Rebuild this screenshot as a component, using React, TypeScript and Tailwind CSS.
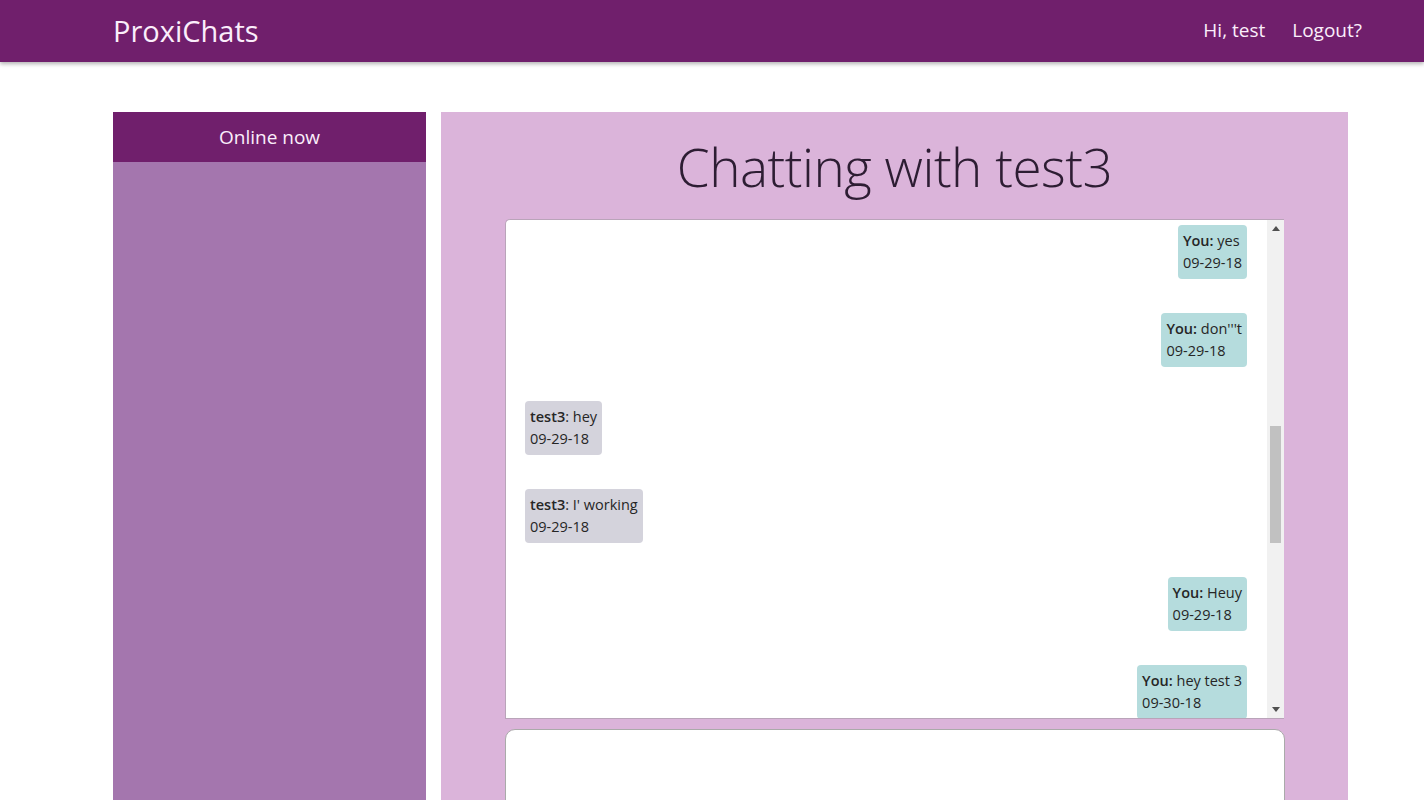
import React from "react";

type Msg = { me: boolean; name: string; text: string; date: string };

const msgs: Msg[] = [
  { me: true, name: "You:", text: "yes", date: "09-29-18" },
  { me: true, name: "You:", text: "don'''t", date: "09-29-18" },
  { me: false, name: "test3", text: ": hey", date: "09-29-18" },
  { me: false, name: "test3", text: ": I' working", date: "09-29-18" },
  { me: true, name: "You:", text: "Heuy", date: "09-29-18" },
  { me: true, name: "You:", text: "hey test 3", date: "09-30-18" },
];

export default function App() {
  return (
    <div
      className="bg-white overflow-hidden h-[800px]"
      style={{ fontFamily: '"Open Sans", "Noto Sans", sans-serif' }}
    >
      <nav className="h-[62px] bg-[#701f6c] shadow-[0_2px_4px_rgba(0,0,0,0.3)] flex items-center justify-between pl-[113px] pr-[62px] relative z-10">
        <span className="text-[#fbeefb] text-[29px] leading-none pb-[2px]">ProxiChats</span>
        <div className="flex items-center gap-[27px] text-[#fbeefb] text-[19px] pb-[2px]">
          <span>Hi, test</span>
          <span>Logout?</span>
        </div>
      </nav>

      <div className="ml-[113px] w-[1235px] mt-[50px] flex gap-[15px]">
        <aside className="w-[313px] h-[700px] bg-[#a476ae] flex flex-col">
          <div className="h-[50px] bg-[#701f6c] flex items-center justify-center text-[#fbeefb] text-[19px]">
            Online now
          </div>
        </aside>

        <main className="flex-1 h-[700px] bg-[#dbb4da] flex flex-col items-center">
          <h1 className="text-[#2d1d33] text-[53px] font-light tracking-[-0.5px] leading-none mt-[28px] mb-[26px] shrink-0">
            Chatting with test3
          </h1>
          <div className="w-[779px] h-[500px] shrink-0 bg-white border-t border-l border-b border-[#b9a4b9] rounded-tl-[5px] flex overflow-hidden">
            <div className="flex-1 overflow-hidden pl-[19px] pr-5 pt-[5px] flex flex-col gap-[34px]">
              {msgs.map((m, i) => (
                <div key={i} className={(m.me ? "flex justify-end" : "flex justify-start") + " shrink-0"}>
                  <div
                    className={
                      (m.me ? "bg-[#b5dcdd]" : "bg-[#d4d3dc]") +
                      " rounded-[4px] px-[5px] py-[5px] text-[14.5px] leading-[22px] text-[#262626] shrink-0"
                    }
                  >
                    <div className="whitespace-nowrap">
                      <span className="font-semibold">{m.name}</span>
                      {m.me ? " " + m.text : m.text}
                    </div>
                    <div>{m.date}</div>
                  </div>
                </div>
              ))}
            </div>
            <div className="w-[17px] bg-[#f1f1f1] flex flex-col items-center justify-between py-[6px] relative">
              <svg width="8" height="5" viewBox="0 0 8 5"><path d="M4 0L8 5H0z" fill="#505050" /></svg>
              <svg width="8" height="5" viewBox="0 0 8 5"><path d="M0 0H8L4 5z" fill="#505050" /></svg>
              <div className="absolute left-[3px] top-[206px] w-[11px] h-[117px] bg-[#c1c1c1]" />
            </div>
          </div>
          <div className="w-[780px] h-[100px] shrink-0 mt-[10px] bg-white border border-[#aaaaaa] rounded-t-[10px]" />
        </main>
      </div>
    </div>
  );
}
